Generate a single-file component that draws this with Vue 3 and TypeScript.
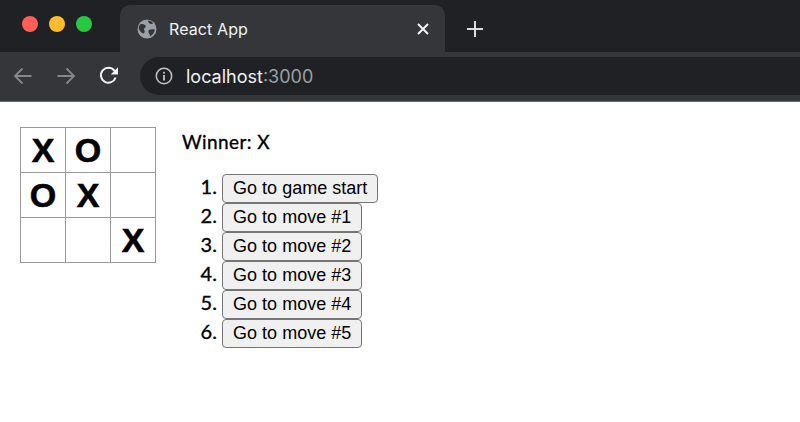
<script setup lang="ts">
const squares: string[] = ['X', 'O', '', 'O', 'X', '', '', '', 'X']
const moves: string[] = [
  'Go to game start',
  'Go to move #1',
  'Go to move #2',
  'Go to move #3',
  'Go to move #4',
  'Go to move #5',
]
</script>

<template>
  <div class="page">
    <header class="chrome">
      <div class="tabstrip">
        <div class="lights">
          <span class="light red"></span>
          <span class="light yellow"></span>
          <span class="light green"></span>
        </div>
        <div class="tab">
          <svg class="globe" width="20" height="20" viewBox="0 0 20 20">
            <circle cx="10" cy="10" r="9.5" fill="#9aa0a6" />
            <path d="M3 5.500c2-.8 3.500-.6 5 .6 1.200 1 1 2.200-.2 2.800-1 .5-1 1.500-.4 2.400.6 1 .2 2.400-.8 3.200C4.500 14 2 11.500 1.800 9 1.700 7.500 2.200 6.500 3 5.500zM11 1.500c2 .2 4 1.200 5.300 2.800-1 .8-2.300 1-3.300.5-1-.4-2-1.800-2-3.300zM12 11c1.500-1 3.800-1 5.800-.4-.3 2.600-1.800 5-4.300 6.600-.8-1-.8-2-1.500-3-.7-1-1-2.400 0-3.200z" fill="#35363a" />
          </svg>
          <span class="tab-title">React App</span>
          <svg class="close" width="12" height="12" viewBox="0 0 12 12">
            <path d="M1 1l10 10M11 1L1 11" stroke="#f1f3f4" stroke-width="2" />
          </svg>
        </div>
        <svg class="plus" width="18" height="18" viewBox="0 0 18 18">
          <path d="M9 1v16M1 9h16" stroke="#dadce0" stroke-width="2" />
        </svg>
      </div>
      <div class="toolbar">
        <svg class="nav" width="20" height="18" viewBox="0 0 20 18">
          <path d="M18.500 9H2M9.500 1.500L2 9l7.500 7.500" fill="none" stroke="#85878a" stroke-width="1.800" />
        </svg>
        <svg class="nav" width="20" height="18" viewBox="0 0 20 18">
          <path d="M1.500 9H18M10.500 1.500L18 9l-7.500 7.500" fill="none" stroke="#85878a" stroke-width="1.800" />
        </svg>
        <svg class="nav reload" width="20" height="20" viewBox="0 0 20 20">
          <path d="M16.600 11.500A7.500 7.500 0 1 1 15.300 4.500L17.500 6.800" fill="none" stroke="#f1f3f4" stroke-width="2" />
          <path d="M19 1.200V8.500H11.700z" fill="#f1f3f4" />
        </svg>
        <div class="omnibox">
          <svg class="info" width="18" height="18" viewBox="0 0 18 18">
            <circle cx="9" cy="9" r="7.700" fill="none" stroke="#c4c7ca" stroke-width="1.500" />
            <rect x="8.100" y="8" width="1.800" height="5.500" fill="#c4c7ca" />
            <rect x="8.100" y="4.800" width="1.800" height="1.800" fill="#c4c7ca" />
          </svg>
          <span class="host">localhost</span><span class="port">:3000</span>
        </div>
      </div>
    </header>

    <main class="game">
      <div class="board">
        <div v-for="(value, index) in squares" :key="index" class="square">{{ value }}</div>
      </div>
      <div class="info-panel">
        <div class="status">Winner: X</div>
        <ol class="moves">
          <li v-for="move in moves" :key="move">
            <button class="move" type="button">{{ move }}</button>
          </li>
        </ol>
      </div>
    </main>
  </div>
</template>

<style>
html,
body {
  margin: 0;
  background: #fff;
}
</style>

<style scoped>
.page {
  width: 800px;
  height: 422px;
  overflow: hidden;
  background: #fff;
}
.chrome {
  background: #202124;
  padding-top: 5px;
  font-family: "Liberation Sans", Arial, sans-serif;
}
.tabstrip {
  height: 47px;
  display: flex;
  align-items: stretch;
  background: #202124;
}
.lights {
  width: 120px;
  display: flex;
  gap: 11px;
  padding: 11px 0 0 22px;
  box-sizing: border-box;
}
.light {
  width: 16px;
  height: 16px;
  border-radius: 50%;
}
.red { background: #ff5f57; }
.yellow { background: #febc2e; }
.green { background: #28c840; }
.tab {
  width: 325px;
  display: flex;
  align-items: center;
  background: #35363a;
  border-radius: 10px 10px 0 0;
  padding: 0 16px 0 17px;
  box-sizing: border-box;
}
.tab-title {
  margin-left: 12px;
  flex: 1;
  font-size: 16px;
  color: #f1f3f4;
  font-family: Inter, "Liberation Sans", sans-serif;
  letter-spacing: 0.1px;
}
.plus {
  margin: 15px 0 0 21px;
}
.toolbar {
  height: 50px;
  display: flex;
  align-items: center;
  background: #35363a;
  padding: 0 0 1px 13px;
  border-bottom: 1px solid #6a6b6e;
  box-sizing: border-box;
}
.nav {
  margin-right: 23px;
}
.reload {
  margin-right: 20px;
}
.omnibox {
  flex: 1;
  height: 38px;
  display: flex;
  align-items: center;
  background: #202124;
  border-radius: 19px 0 0 19px;
  padding-left: 15px;
  font-family: Inter, "Liberation Sans", sans-serif;
  font-size: 18px;
  margin-left: 1px;
}
.info {
  margin-right: 13px;
}
.host {
  color: #f1f3f4;
}
.port {
  color: #9aa0a6;
}
.game {
  display: flex;
  padding: 25px 20px 0;
}
.board {
  width: 136px;
  height: 136px;
  display: grid;
  grid-template-columns: repeat(3, 45px);
  grid-template-rows: repeat(3, 45px);
  flex: none;
}
.square {
  border: 1px solid #999;
  box-sizing: border-box;
  width: 46px;
  height: 46px;
  background: #fff;
  color: #000;
  font-family: "Liberation Sans", Arial, sans-serif;
  font-weight: 700;
  font-size: 34px;
  -webkit-text-stroke: 0.6px #000;
  line-height: 44px;
  text-align: center;
}
.info-panel {
  margin-left: 26px;
  font-family: Lato, sans-serif;
  color: #000;
}
.status {
  font-size: 19px;
  letter-spacing: 0.4px;
  -webkit-text-stroke: 0.35px #000;
  line-height: 24px;
  margin-top: 3px;
}
.moves {
  margin: 20px 0 0;
  padding-left: 40px;
  font-size: 20px;
  -webkit-text-stroke: 0.35px #000;
}
.moves li {
  height: 29px;
}
.move {
  height: 29px;
  padding: 0 10px;
  font-family: "Liberation Sans", Arial, sans-serif;
  font-size: 18px;
  font-weight: 400;
  -webkit-text-stroke: 0;
  letter-spacing: 0.02px;
  color: #000;
  background: #f0f0f0;
  border: 1.500px solid #767676;
  border-radius: 4px;
  vertical-align: top;
}
</style>
